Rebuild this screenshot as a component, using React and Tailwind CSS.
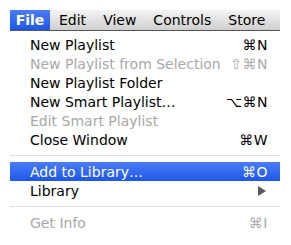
import React from "react";

const items = [
	{ label: "New Playlist", key: "⌘N" },
	{ label: "New Playlist from Selection", key: "⇧⌘N", disabled: true },
	{ label: "New Playlist Folder" },
	{ label: "New Smart Playlist…", key: "⌥⌘N" },
	{ label: "Edit Smart Playlist", disabled: true },
	{ label: "Close Window", key: "⌘W" },
	{ sep: true },
	{ label: "Add to Library…", key: "⌘O", active: true },
	{ label: "Library", sub: true },
	{ sep: true },
	{ label: "Get Info", key: "⌘I", disabled: true },
	{ label: "Rating", sub: true },
];

const MenuRow = ({ item }) => {
	if (item.sep) {
		return (
			<div className="h-[13px] flex items-center">
				<div className="h-px w-full bg-[#e2e2e2]" />
			</div>
		);
	}
	const color = item.active ? "text-white" : item.disabled ? "text-[#a8a8a8]" : "text-black";
	return (
		<div
			className={`h-[19px] flex items-center justify-between pl-5 pr-[12px] ${color} ${
				item.active ? "bg-gradient-to-b from-[#4a7cf5] to-[#1e56ee]" : ""
			}`}
		>
			<span>{item.label}</span>
			{item.sub ? (
				<svg width="8" height="10" viewBox="0 0 8 10" className="mr-[2px]">
					<path d="M0 0 L8 5 L0 10 Z" fill="#595959" />
				</svg>
			) : (
				<span className="tracking-[0.5px]">{item.key}</span>
			)}
		</div>
	);
};

export default function App() {
	return (
		<div className="w-[291px] h-[245px] bg-white overflow-hidden pt-[10px] pl-[10px] font-['DejaVu_Sans',sans-serif] text-[14px] leading-none">
			<div className="w-[270px]">
				<div className="h-[21px] flex items-center bg-gradient-to-b from-[#f4f4f4] to-[#cfcfcf] border-b border-[#555] text-black">
					<div className="h-full w-[40px] flex items-center justify-center bg-gradient-to-b from-[#4a7cf5] to-[#1e56ee] text-white font-bold">
						File
					</div>
					<div className="flex gap-[17px] pl-[9px]">
						<span>Edit</span>
						<span>View</span>
						<span>Controls</span>
						<span>Store</span>
					</div>
				</div>
				<div className="pt-[4px] h-[204px] overflow-hidden">
					{items.map((item, i) => (
						<MenuRow key={i} item={item} />
					))}
				</div>
			</div>
		</div>
	);
}
